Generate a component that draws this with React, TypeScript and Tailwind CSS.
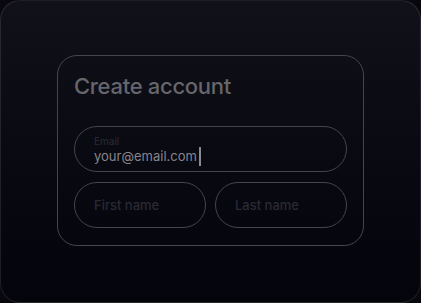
export default function App() {
  return (
    <div
      className="w-[421px] h-[303px] bg-[#07070d]"
      style={{ fontFamily: 'Inter, "Liberation Sans", sans-serif' }}
    >
      <div className="w-full h-full rounded-[20px] border border-white/10 bg-gradient-to-b from-[#111119] to-[#04040b] flex justify-center pt-[54px]">
        <div className="w-[307px] h-[191px] rounded-[20px] border border-[#45454f] px-[16px] pt-[16px]">
          <h1 className="text-[22px] leading-[28px] font-medium text-[#66666c] tracking-[-0.3px]">Create account</h1>

          <div className="mt-[26px] h-[46px] rounded-full border border-[#45454f] pl-[19px] flex flex-col justify-center pt-[2px]">
            <span className="text-[10px] leading-[12px] text-[#2c2c36]">Email</span>
            <div className="flex items-center">
              <span className="text-[13px] leading-[18px] text-[#86868d]">your@email.com</span>
              <span className="w-[2px] h-[19px] bg-[#8a8a91] ml-[2px]" />
            </div>
          </div>

          <div className="mt-[10px] flex gap-[9px]">
            <div className="flex-1 h-[46px] rounded-full border border-[#45454f] pl-[19px] pt-[2px] flex items-center">
              <span className="text-[13px] font-medium text-[#2a2a34]">First name</span>
            </div>
            <div className="flex-1 h-[46px] rounded-full border border-[#45454f] pl-[19px] pt-[2px] flex items-center">
              <span className="text-[13px] font-medium text-[#2a2a34]">Last name</span>
            </div>
          </div>
        </div>
      </div>
    </div>
  );
}
